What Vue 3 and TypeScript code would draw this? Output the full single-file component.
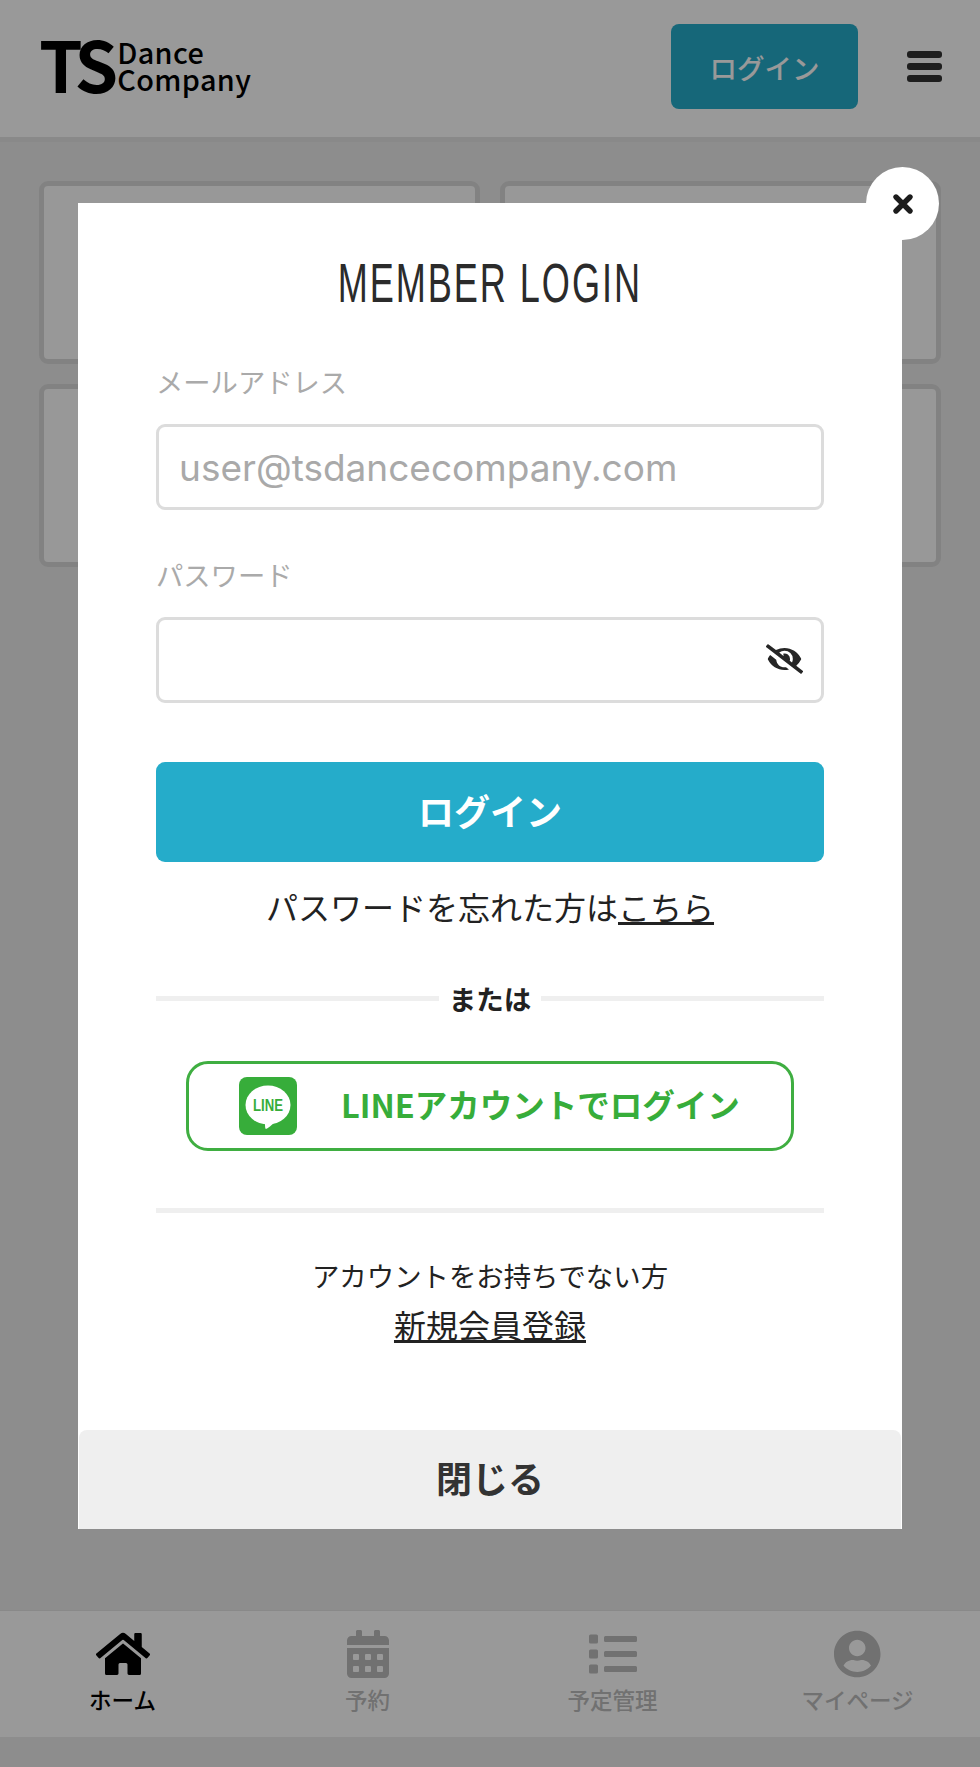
<script setup lang="ts">
interface NavItem {
  label: string
  viewBox: string
  path: string
  active?: boolean
}

const cards: number[] = [1, 2, 3, 4]

const navItems: NavItem[] = [
  {
    label: 'ホーム',
    active: true,
    viewBox: '0 0 576 512',
    path: 'M280.37 148.26L96 300.11V464a16 16 0 0 0 16 16l112.06-.29a16 16 0 0 0 15.92-16V368a16 16 0 0 1 16-16h64a16 16 0 0 1 16 16v95.64a16 16 0 0 0 16 16.05L464 480a16 16 0 0 0 16-16V300L295.67 148.26a12.19 12.19 0 0 0-15.3 0zM571.6 251.47L488 182.56V44.05a12 12 0 0 0-12-12h-56a12 12 0 0 0-12 12v72.61L318.47 43a48 48 0 0 0-61 0L4.34 251.47a12 12 0 0 0-1.6 16.9l25.5 31A12 12 0 0 0 45.15 301l235.22-193.74a12.19 12.19 0 0 1 15.3 0L530.9 301a12 12 0 0 0 16.9-1.6l25.5-31a12 12 0 0 0-1.7-16.93z'
  },
  {
    label: '予約',
    viewBox: '0 0 448 512',
    path: 'M0 464c0 26.5 21.5 48 48 48h352c26.5 0 48-21.5 48-48V192H0v272zm320-196c0-6.6 5.4-12 12-12h40c6.6 0 12 5.4 12 12v40c0 6.6-5.4 12-12 12h-40c-6.6 0-12-5.4-12-12v-40zm0 128c0-6.6 5.4-12 12-12h40c6.6 0 12 5.4 12 12v40c0 6.6-5.4 12-12 12h-40c-6.6 0-12-5.4-12-12v-40zM192 268c0-6.6 5.4-12 12-12h40c6.6 0 12 5.4 12 12v40c0 6.6-5.4 12-12 12h-40c-6.6 0-12-5.4-12-12v-40zm0 128c0-6.6 5.4-12 12-12h40c6.6 0 12 5.4 12 12v40c0 6.6-5.4 12-12 12h-40c-6.6 0-12-5.4-12-12v-40zM64 268c0-6.6 5.4-12 12-12h40c6.6 0 12 5.4 12 12v40c0 6.6-5.4 12-12 12H76c-6.6 0-12-5.4-12-12v-40zm0 128c0-6.6 5.4-12 12-12h40c6.6 0 12 5.4 12 12v40c0 6.6-5.4 12-12 12H76c-6.6 0-12-5.4-12-12v-40zM400 64h-48V16c0-8.8-7.2-16-16-16h-32c-8.8 0-16 7.2-16 16v48H160V16c0-8.8-7.2-16-16-16h-32c-8.8 0-16 7.2-16 16v48H48C21.5 64 0 85.5 0 112v48h448v-48c0-26.5-21.5-48-48-48z'
  },
  {
    label: '予定管理',
    viewBox: '0 0 512 512',
    path: 'M80 368H16a16 16 0 0 0-16 16v64a16 16 0 0 0 16 16h64a16 16 0 0 0 16-16v-64a16 16 0 0 0-16-16zm0-320H16A16 16 0 0 0 0 64v64a16 16 0 0 0 16 16h64a16 16 0 0 0 16-16V64a16 16 0 0 0-16-16zm0 160H16a16 16 0 0 0-16 16v64a16 16 0 0 0 16 16h64a16 16 0 0 0 16-16v-64a16 16 0 0 0-16-16zm416 176H176a16 16 0 0 0-16 16v32a16 16 0 0 0 16 16h320a16 16 0 0 0 16-16v-32a16 16 0 0 0-16-16zm0-320H176a16 16 0 0 0-16 16v32a16 16 0 0 0 16 16h320a16 16 0 0 0 16-16V80a16 16 0 0 0-16-16zm0 160H176a16 16 0 0 0-16 16v32a16 16 0 0 0 16 16h320a16 16 0 0 0 16-16v-32a16 16 0 0 0-16-16z'
  },
  {
    label: 'マイページ',
    viewBox: '0 0 496 512',
    path: 'M248 8C111 8 0 119 0 256s111 248 248 248 248-111 248-248S385 8 248 8zm0 96c48.6 0 88 39.4 88 88s-39.4 88-88 88-88-39.4-88-88 39.4-88 88-88zm0 344c-58.7 0-111.3-26.6-146.5-68.2 18.8-35.4 55.6-59.8 98.5-59.8 2.4 0 4.8.4 7.1 1.1 13 4.2 26.6 6.9 40.9 6.9 14.3 0 28-2.7 40.9-6.9 2.3-.7 4.7-1.1 7.1-1.1 42.9 0 79.7 24.4 98.5 59.8C359.3 421.4 306.7 448 248 448z'
  }
]
</script>

<template>
  <div class="page">
    <header class="header">
      <div class="logo">
        <span class="logo-ts">TS</span>
        <span class="logo-words">
          <span>Dance</span>
          <span>Company</span>
        </span>
      </div>
      <button class="header-login" type="button">ログイン</button>
      <div class="burger"><i></i><i></i><i></i></div>
    </header>

    <main class="main">
      <div v-for="c in cards" :key="c" class="card"></div>
    </main>

    <nav class="nav">
      <div v-for="item in navItems" :key="item.label" class="nav-item" :class="{ active: item.active }">
        <svg class="nav-icon" :viewBox="item.viewBox" fill="currentColor"><path :d="item.path" /></svg>
        <span class="nav-label">{{ item.label }}</span>
      </div>
    </nav>

    <div class="overlay">
      <section class="modal">
        <button class="close" type="button" aria-label="閉じる">
          <svg viewBox="0 0 24 24" width="24" height="24"><path d="M5 5 L19 19 M19 5 L5 19" stroke="#1c1c1c" stroke-width="5.4" stroke-linecap="round" /></svg>
        </button>

        <div class="modal-body">
          <h1 class="title"><span>MEMBER LOGIN</span></h1>

          <label class="field-label">メールアドレス</label>
          <input class="input" type="text" placeholder="user@tsdancecompany.com" />

          <label class="field-label second">パスワード</label>
          <div class="password">
            <input class="input" type="password" />
            <svg class="eye" viewBox="0 0 640 512" fill="#262626"><path d="M320 400c-75.85 0-137.25-58.71-142.9-133.11L72.2 185.82c-13.79 17.3-26.48 35.59-36.72 55.59a32.35 32.35 0 0 0 0 29.19C89.71 376.41 197.07 448 320 448c26.91 0 52.87-4 77.89-10.46L346 397.39a144.13 144.13 0 0 1-26 2.61zm313.82 58.1l-110.55-85.44a331.25 331.25 0 0 0 81.25-102.07 32.35 32.35 0 0 0 0-29.19C550.29 135.59 442.93 64 320 64a308.15 308.15 0 0 0-147.32 37.7L45.46 3.37A16 16 0 0 0 23 6.18L3.37 31.45A16 16 0 0 0 6.18 53.9l588.36 454.73a16 16 0 0 0 22.46-2.81l19.64-25.27a16 16 0 0 0-2.82-22.45zm-183.72-142l-39.3-30.38A94.75 94.75 0 0 0 416 256a94.76 94.76 0 0 0-121.31-92.21A47.65 47.65 0 0 1 304 192a46.64 46.64 0 0 1-1.54 10l-73.61-56.89A142.31 142.31 0 0 1 320 112a143.92 143.92 0 0 1 144 144c0 21.63-5.29 41.79-13.9 60.11z" /></svg>
          </div>

          <button class="submit" type="button">ログイン</button>
          <p class="forgot">パスワードを忘れた方は<u>こちら</u></p>

          <div class="or"><span>または</span></div>

          <button class="line-btn" type="button">
            <svg class="line-icon" viewBox="0 0 58 58">
              <rect width="58" height="58" rx="8" fill="#37ad3a" />
              <ellipse cx="29" cy="28" rx="22.5" ry="19.5" fill="#fff" />
              <path d="M26 44 L37 44 C33 48 29 51 27 52 C26 52 26 49 26 44Z" fill="#fff" />
              <text x="29" y="34" text-anchor="middle" textLength="30" lengthAdjust="spacingAndGlyphs" class="line-word">LINE</text>
            </svg>
            <span>LINEアカウントでログイン</span>
          </button>

          <hr class="rule" />

          <p class="no-account">アカウントをお持ちでない方</p>
          <p class="signup"><u>新規会員登録</u></p>
        </div>

        <button class="close-bar" type="button">閉じる</button>
      </section>
    </div>
  </div>
</template>

<style scoped>
.page {
  position: relative;
  width: 980px;
  height: 1767px;
  display: flex;
  flex-direction: column;
  overflow: hidden;
  background: #ececec;
  font-family: "Noto Sans CJK JP", "Noto Sans", sans-serif;
  color: #222;
}

.header {
  height: 137px;
  box-sizing: content-box;
  flex: none;
  display: flex;
  align-items: center;
  padding: 0 38px 0 39px;
  background: #fff;
  border-bottom: 5px solid #e4e4e4;
}

.logo {
  display: flex;
  align-items: center;
  flex: 1;
  color: #000;
  margin-top: -12px;
}

.logo-ts {
  font-size: 70px;
  font-weight: 700;
  line-height: 1;
  letter-spacing: -6px;
}

.logo-words {
  display: flex;
  flex-direction: column;
  margin: 4px 0 0 5px;
  font-size: 28.8px;
  font-weight: 500;
  line-height: 27px;
  letter-spacing: 0.4px;
}

.header-login {
  width: 187px;
  height: 85px;
  margin-top: -4px;
  border: 0;
  border-radius: 8px;
  background: #25acca;
  color: #fff;
  font: 500 27.5px "Noto Sans CJK JP", sans-serif;
}

.burger {
  width: 35px;
  margin: -4px 0 0 49px;
  display: flex;
  flex-direction: column;
  gap: 5px;
}

.burger i {
  display: block;
  height: 7px;
  border-radius: 3px;
  background: #333;
}

.main {
  flex: 1;
  display: grid;
  grid-template-columns: 1fr 1fr;
  grid-auto-rows: 183px;
  gap: 20px 20px;
  padding: 39px 39px 0;
  align-content: start;
}

.card {
  box-sizing: border-box;
  border: 5px solid #d9d9d9;
  border-radius: 9px;
  background: #fdfdfd;
}

.nav {
  flex: none;
  height: 127px;
  box-sizing: border-box;
  margin-bottom: 30px;
  display: grid;
  grid-template-columns: repeat(4, 1fr);
  background: #fff;
  border-top: 1px solid #e4e4e4;
}

.nav-item {
  display: flex;
  flex-direction: column;
  align-items: center;
  padding-top: 19px;
  color: #bcbcbc;
}

.nav-item.active {
  color: #000;
}

.nav-icon {
  height: 48px;
  display: block;
}

.nav-label {
  margin-top: 5px;
  font-size: 22.5px;
  font-weight: 500;
  line-height: 32px;
}

.overlay {
  position: absolute;
  inset: 0;
  display: flex;
  justify-content: center;
  align-items: flex-start;
  padding-top: 203px;
  background: rgba(0, 0, 0, 0.4);
}

.modal {
  position: relative;
  width: 824px;
  height: 1326px;
  display: flex;
  flex-direction: column;
  background: #fff;
}

.close {
  position: absolute;
  top: -36px;
  right: -37px;
  width: 73px;
  height: 73px;
  padding: 0;
  border: 0;
  border-radius: 50%;
  background: #fff;
  display: flex;
  align-items: center;
  justify-content: center;
}

.modal-body {
  flex: 1;
  padding: 0 78px;
  display: flex;
  flex-direction: column;
}

.title {
  margin: 48px 0 0;
  height: 64px;
  text-align: center;
  font-family: "Liberation Sans", sans-serif;
  font-size: 56px;
  font-weight: 400;
  line-height: 64px;
  letter-spacing: 3px;
  color: #2b2b2b;
  white-space: nowrap;
}

.title span {
  display: inline-block;
  transform: scaleX(0.645);
}

.field-label {
  margin-top: 46px;
  font-size: 27.3px;
  line-height: 40px;
  color: #aaa;
}

.field-label.second {
  margin-top: 44px;
}

.input {
  display: block;
  box-sizing: border-box;
  width: 100%;
  height: 86px;
  margin: 23px 0 0;
  padding: 0 20px;
  border: 3px solid #dcdcdc;
  border-radius: 9px;
  background: #fff;
  font-family: "Inter", "Liberation Sans", sans-serif;
  font-size: 37px;
  outline: none;
}

.input::placeholder {
  color: #a9a9a9;
  opacity: 1;
}

.password {
  position: relative;
}

.eye {
  position: absolute;
  right: 21px;
  top: 50px;
  width: 37px;
  height: 30px;
}

.submit {
  height: 100px;
  margin-top: 59px;
  border: 0;
  border-radius: 9px;
  background: #25acca;
  color: #fff;
  font: 700 36px "Noto Sans CJK JP", sans-serif;
  padding-bottom: 6px;
}

.forgot {
  margin: 20px 0 0;
  text-align: center;
  font-size: 32px;
  line-height: 48px;
  color: #222;
}

.or {
  margin-top: 48px;
  height: 40px;
  display: flex;
  align-items: center;
  gap: 10px;
  font-size: 27.5px;
  font-weight: 700;
  color: #222;
}

.or::before,
.or::after {
  content: "";
  flex: 1;
  height: 5px;
  background: #efefef;
}

.line-btn {
  align-self: center;
  width: 608px;
  height: 90px;
  margin-top: 43px;
  padding: 0 0 0 50px;
  box-sizing: border-box;
  display: flex;
  align-items: center;
  gap: 44px;
  border: 3px solid #3fae41;
  border-radius: 22px;
  background: #fff;
  color: #37ad3a;
  font: 700 32.5px "Noto Sans CJK JP", sans-serif;
}

.line-btn span {
  position: relative;
  top: -3px;
}

.line-icon {
  width: 58px;
  height: 58px;
  flex: none;
}

.line-word {
  font-family: "Liberation Sans", sans-serif;
  font-size: 16.5px;
  font-weight: 700;
  fill: #37ad3a;
}

.rule {
  width: 100%;
  height: 5px;
  margin: 57px 0 0;
  border: 0;
  background: #efefef;
}

.no-account {
  margin: 42px 0 0;
  text-align: center;
  font-size: 27.4px;
  line-height: 40px;
  color: #222;
}

.signup {
  margin: 6px 0 0;
  text-align: center;
  font-size: 32px;
  line-height: 46px;
  color: #222;
}

.close-bar {
  flex: none;
  height: 99px;
  margin: 0 1px;
  padding-bottom: 7px;
  border: 0;
  border-radius: 8px 8px 0 0;
  background: #efefef;
  color: #333;
  font: 700 36px "Noto Sans CJK JP", sans-serif;
}
</style>
